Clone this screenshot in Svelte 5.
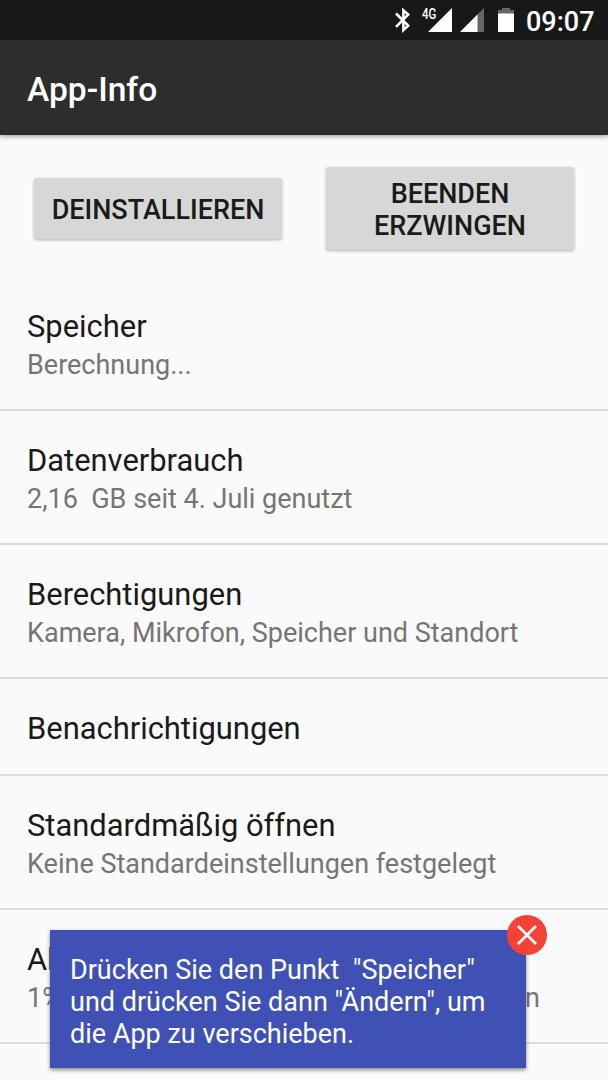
<script lang="ts">
	interface Entry {
		title: string;
		summary?: string;
	}

	const entries: Entry[] = [
		{ title: 'Speicher', summary: 'Berechnung...' },
		{ title: 'Datenverbrauch', summary: '2,16  GB seit 4. Juli genutzt' },
		{ title: 'Berechtigungen', summary: 'Kamera, Mikrofon, Speicher und Standort' },
		{ title: 'Benachrichtigungen' },
		{ title: 'Standardmäßig öffnen', summary: 'Keine Standardeinstellungen festgelegt' },
		{ title: 'Akku', summary: '1% \u200AAkkunutzung seit dem letzten Aufladen' }
	];
</script>

<div class="screen">
	<div class="status-bar">
		<svg class="bluetooth" width="16" height="26" viewBox="0 0 16 26" fill="none" stroke="#fff" stroke-width="2.6">
			<path d="M1 6.5 13.2 18.6 8.4 23V3.4L13.2 7.6 1 19.8" />
		</svg>
		<div class="mobile">
			<span class="network">4G</span>
			<svg width="24" height="24" viewBox="0 0 24 24"><path d="M24 0V24H0Z" fill="#fff" /></svg>
		</div>
		<svg class="signal" width="24" height="24" viewBox="0 0 24 24">
			<path d="M24 0V24H0Z" fill="#666" />
			<path d="M17.5 6.5V24H0Z" fill="#fff" />
		</svg>
		<svg class="battery" width="16" height="24" viewBox="0 0 16 24">
			<path d="M4 0H12V2H16V6H0V2H4Z" fill="#666" />
			<path d="M0 5.5H16V24H0Z" fill="#fff" />
		</svg>
		<span class="clock">09:07</span>
	</div>

	<header class="app-bar">
		<h1>App-Info</h1>
	</header>

	<div class="actions">
		<button>Deinstallieren</button>
		<button>Beenden erzwingen</button>
	</div>

	<ul class="entries">
		{#each entries as entry}
			<li>
				<span class="title">{entry.title}</span>
				{#if entry.summary}
					<span class="summary">{entry.summary}</span>
				{/if}
			</li>
		{/each}
	</ul>

	<div class="hint">
		<p>Drücken Sie den Punkt&nbsp; "Speicher"<br />und drücken Sie dann "Ändern", um<br />die App zu verschieben.</p>
		<button class="close" aria-label="Schließen">
			<svg width="40" height="40" viewBox="0 0 40 40">
				<path d="M11 11 29 29M29 11 11 29" stroke="#fff" stroke-width="2.7" />
			</svg>
		</button>
	</div>
</div>

<style>
	:global(body) {
		margin: 0;
		background: #fafafa;
	}

	.screen {
		position: relative;
		width: 608px;
		height: 1080px;
		overflow: hidden;
		background: #fafafa;
		font-family: Roboto, sans-serif;
		color: #1a1a1a;
	}

	.status-bar {
		display: flex;
		align-items: flex-start;
		height: 40px;
		box-sizing: border-box;
		padding-left: 395px;
		background: #181818;
		color: #fff;
	}

	.bluetooth {
		margin-top: 7px;
	}

	.mobile {
		position: relative;
		height: 24px;
		margin: 8px 0 0 17px;
	}

	.mobile svg {
		display: block;
	}

	.network {
		position: absolute;
		left: -6px;
		top: 0;
		font: 500 14.5px/14px Roboto, sans-serif;
		transform: scaleX(0.79);
		transform-origin: left;
	}

	.signal {
		margin: 8px 0 0 8px;
	}

	.battery {
		margin: 8px 0 0 14px;
	}

	.clock {
		margin-left: 12px;
		font-size: 27px;
		font-weight: 500;
		line-height: 44px;
	}

	.app-bar {
		display: flex;
		align-items: center;
		height: 95px;
		padding-left: 27px;
		background: #2d2d2d;
		box-shadow: 0 1px 5px rgba(0, 0, 0, 0.45);
	}

	h1 {
		margin: 3px 0 0;
		font-size: 33.6px;
		font-weight: 500;
		color: #fff;
	}

	.actions {
		display: flex;
		align-items: center;
		gap: 44px;
		height: 142px;
		box-sizing: border-box;
		padding: 5px 34px 0;
	}

	.actions button {
		flex: 1;
		min-height: 61px;
		padding: 11px 15px 8px;
		border: 0;
		border-radius: 3px;
		background: #d6d8d7;
		box-shadow: 0 1px 3px rgba(0, 0, 0, 0.3);
		font: 500 27px/32px Roboto, sans-serif;
		text-transform: uppercase;
		color: #1a1a1a;
	}

	.entries {
		list-style: none;
		margin: 0;
		padding: 0;
	}

	.entries li {
		display: flex;
		flex-direction: column;
		gap: 5px;
		padding: 32px 27px 27px;
		border-bottom: 2px solid #dcdcdc;
		white-space: pre;
	}

	.title {
		font-size: 30.9px;
		line-height: 36px;
	}

	.summary {
		padding-bottom: 2px;
		font-size: 27px;
		line-height: 30px;
		color: #757575;
	}

	.hint {
		position: absolute;
		left: 50px;
		top: 930px;
		width: 476px;
		height: 138px;
		box-sizing: border-box;
		padding: 24px 20px;
		background: #3f51b5;
		box-shadow: 0 2px 4px rgba(0, 0, 0, 0.45);
		color: #fff;
	}

	.hint p {
		margin: 0;
		font-size: 27px;
		line-height: 32px;
		white-space: nowrap;
	}

	.close {
		position: absolute;
		top: -15px;
		right: -21px;
		width: 40px;
		height: 40px;
		padding: 0;
		border: 0;
		border-radius: 50%;
		background: #f44336;
	}

	.close svg {
		display: block;
	}
</style>
